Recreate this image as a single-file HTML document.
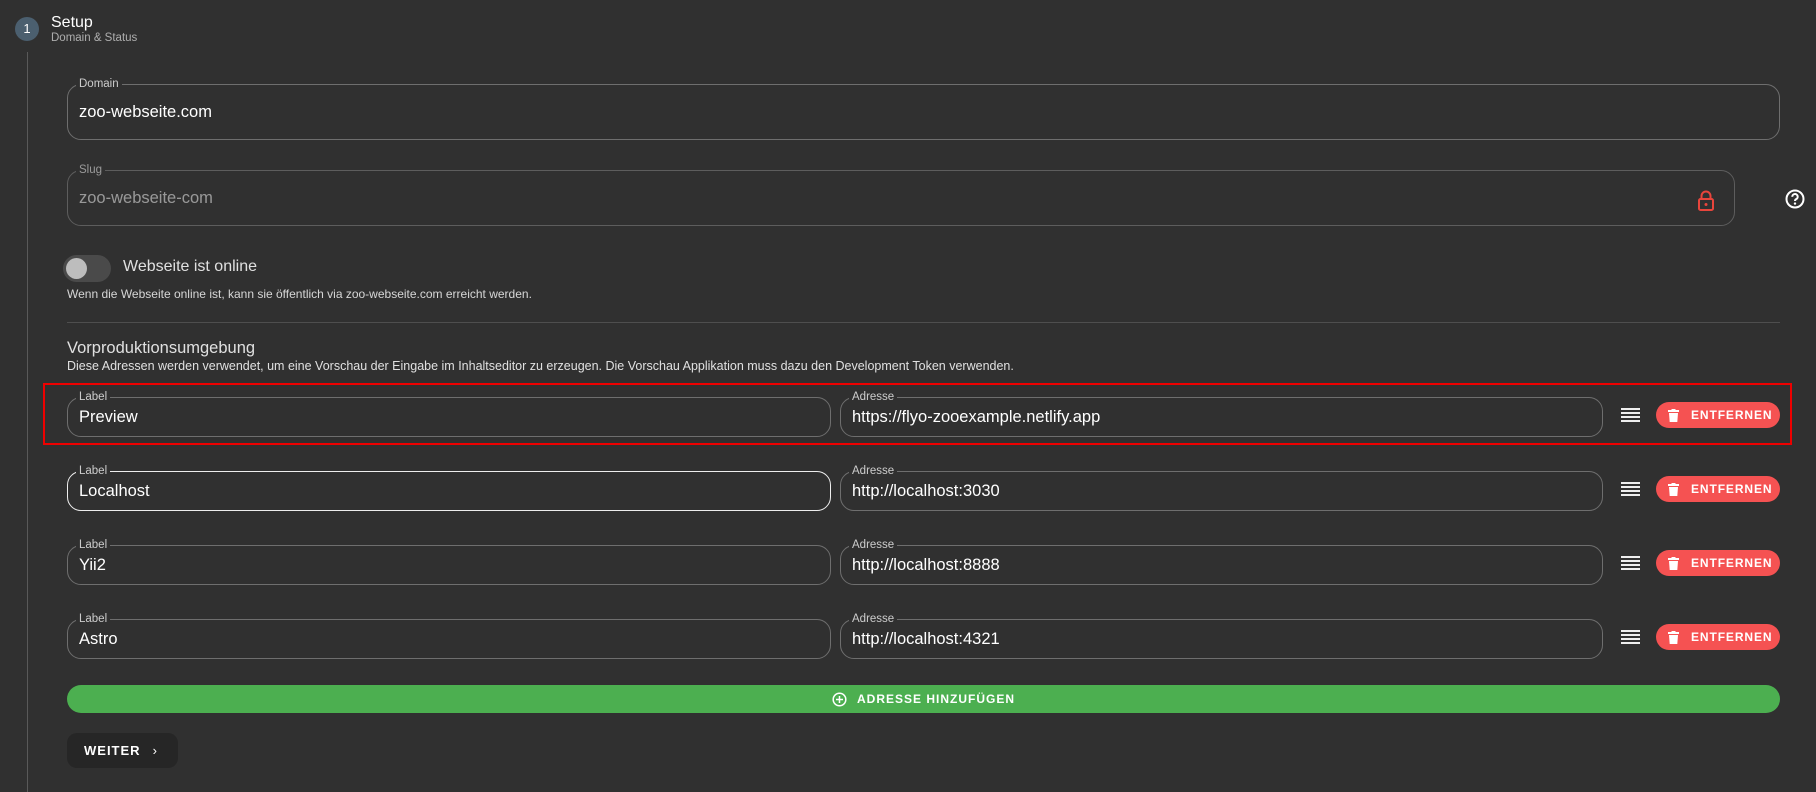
<!DOCTYPE html><html><head><meta charset="utf-8"><style>
*{box-sizing:border-box;margin:0;padding:0}
body{width:1816px;height:785px;background:#303030;font-family:"Liberation Sans",sans-serif;color:#fff;position:relative;overflow:hidden}
.a{position:absolute}
.f{position:absolute;border:1px solid rgba(255,255,255,.3);border-radius:14px}
.f .l{position:absolute;top:-8px;left:8px;padding:0 3px;background:#303030;font-size:11.5px;color:rgba(255,255,255,.75);line-height:14px}
.f .v{position:absolute;left:11px;font-size:16.5px;color:#fff}
.btn{position:absolute;left:1656px;width:124px;height:26px;border-radius:13px;background:#f55252;font-size:12px;font-weight:bold;letter-spacing:0.9px;display:flex;align-items:center;padding-left:12px;white-space:nowrap}
.btn span{margin-left:12px}
.menu{position:absolute;left:1621px;width:19px}
.menu i{display:block;height:2px;background:#eee;margin-bottom:2px}
</style></head><body>
<div class="a" style="left:15px;top:17px;width:24px;height:24px;border-radius:50%;background:#4b5f6f;font-size:13px;text-align:center;line-height:24px">1</div>
<div class="a" style="left:51px;top:14px;font-size:16px">Setup</div>
<div class="a" style="left:51px;top:32px;font-size:11.5px;color:rgba(255,255,255,.6)">Domain &amp; Status</div>
<div class="a" style="left:27px;top:52px;width:1px;height:740px;background:rgba(255,255,255,.2)"></div>

<div class="f" style="left:67px;top:84px;width:1713px;height:56px"><div class="l">Domain</div><div class="v" style="top:18px">zoo-webseite.com</div></div>
<div class="f" style="left:67px;top:170px;width:1668px;height:56px;border-color:rgba(255,255,255,.22)"><div class="l" style="color:rgba(255,255,255,.5)">Slug</div><div class="v" style="top:18px;color:rgba(255,255,255,.5)">zoo-webseite-com</div>
<svg class="a" style="left:1629px;top:19px" width="18" height="22" viewBox="0 0 18 22"><path d="M4.5 9V6a4.5 4.5 0 0 1 9 0v3" fill="none" stroke="#e8453c" stroke-width="2"/><rect x="2" y="9" width="14" height="11" rx="1.5" fill="none" stroke="#e8453c" stroke-width="2"/><circle cx="9" cy="14.5" r="1.5" fill="#e8453c"/></svg></div>
<svg class="a" style="left:1785px;top:189px" width="20" height="20" viewBox="0 0 20 20"><circle cx="10" cy="10" r="8.5" fill="none" stroke="#fff" stroke-width="2"/><path d="M7.3 7.8a2.7 2.7 0 1 1 3.8 2.4c-.8.4-1.1.9-1.1 1.8" fill="none" stroke="#fff" stroke-width="2"/><circle cx="10" cy="14.6" r="1.2" fill="#fff"/></svg>

<div class="a" style="left:63px;top:255px;width:48px;height:27px;border-radius:14px;background:#4a4a4a"></div>
<div class="a" style="left:66px;top:258px;width:21px;height:21px;border-radius:50%;background:#bdbdbd"></div>
<div class="a" style="left:123px;top:258px;font-size:16px;color:rgba(255,255,255,.85)">Webseite ist online</div>
<div class="a" style="left:67px;top:287px;font-size:12px;color:rgba(255,255,255,.8)">Wenn die Webseite online ist, kann sie öffentlich via zoo-webseite.com erreicht werden.</div>
<div class="a" style="left:67px;top:322px;width:1713px;height:1px;background:rgba(255,255,255,.15)"></div>
<div class="a" style="left:67px;top:339px;font-size:16.5px;color:rgba(255,255,255,.85)">Vorproduktionsumgebung</div>
<div class="a" style="left:67px;top:359px;font-size:12.5px;color:rgba(255,255,255,.85)">Diese Adressen werden verwendet, um eine Vorschau der Eingabe im Inhaltseditor zu erzeugen. Die Vorschau Applikation muss dazu den Development Token verwenden.</div>
<div class="a" style="left:43px;top:383px;width:1749px;height:62px;border:2px solid #e00"></div>

<div class="f" style="left:67px;top:397px;width:764px;height:40px"><div class="l">Label</div><div class="v" style="top:10px">Preview</div></div>
<div class="f" style="left:840px;top:397px;width:763px;height:40px"><div class="l">Adresse</div><div class="v" style="top:10px">https://flyo-zooexample.netlify.app</div></div>
<div class="menu" style="top:408px"><i></i><i></i><i></i><i></i></div>
<div class="btn" style="top:402px"><svg width="11" height="13" viewBox="0 0 11 13"><rect x="0" y="1" width="11" height="2" fill="#fff"/><rect x="3.5" y="0" width="4" height="2" fill="#fff"/><path d="M1 4h9l-.7 9H1.7z" fill="#fff"/></svg><span>ENTFERNEN</span></div>

<div class="f" style="left:67px;top:471px;width:764px;height:40px;border-color:#eee"><div class="l">Label</div><div class="v" style="top:10px">Localhost</div></div>
<div class="f" style="left:840px;top:471px;width:763px;height:40px"><div class="l">Adresse</div><div class="v" style="top:10px">http://localhost:3030</div></div>
<div class="menu" style="top:482px"><i></i><i></i><i></i><i></i></div>
<div class="btn" style="top:476px"><svg width="11" height="13" viewBox="0 0 11 13"><rect x="0" y="1" width="11" height="2" fill="#fff"/><rect x="3.5" y="0" width="4" height="2" fill="#fff"/><path d="M1 4h9l-.7 9H1.7z" fill="#fff"/></svg><span>ENTFERNEN</span></div>

<div class="f" style="left:67px;top:545px;width:764px;height:40px"><div class="l">Label</div><div class="v" style="top:10px">Yii2</div></div>
<div class="f" style="left:840px;top:545px;width:763px;height:40px"><div class="l">Adresse</div><div class="v" style="top:10px">http://localhost:8888</div></div>
<div class="menu" style="top:556px"><i></i><i></i><i></i><i></i></div>
<div class="btn" style="top:550px"><svg width="11" height="13" viewBox="0 0 11 13"><rect x="0" y="1" width="11" height="2" fill="#fff"/><rect x="3.5" y="0" width="4" height="2" fill="#fff"/><path d="M1 4h9l-.7 9H1.7z" fill="#fff"/></svg><span>ENTFERNEN</span></div>

<div class="f" style="left:67px;top:619px;width:764px;height:40px"><div class="l">Label</div><div class="v" style="top:10px">Astro</div></div>
<div class="f" style="left:840px;top:619px;width:763px;height:40px"><div class="l">Adresse</div><div class="v" style="top:10px">http://localhost:4321</div></div>
<div class="menu" style="top:630px"><i></i><i></i><i></i><i></i></div>
<div class="btn" style="top:624px"><svg width="11" height="13" viewBox="0 0 11 13"><rect x="0" y="1" width="11" height="2" fill="#fff"/><rect x="3.5" y="0" width="4" height="2" fill="#fff"/><path d="M1 4h9l-.7 9H1.7z" fill="#fff"/></svg><span>ENTFERNEN</span></div>

<div class="a" style="left:67px;top:685px;width:1713px;height:28px;border-radius:14px;background:#4caf50;display:flex;align-items:center;justify-content:center;font-size:12px;font-weight:bold;letter-spacing:1px">
<svg width="15" height="15" viewBox="0 0 15 15" style="margin-right:10px"><circle cx="7.5" cy="7.5" r="6.3" fill="none" stroke="#fff" stroke-width="1.5"/><path d="M7.5 4v7M4 7.5h7" stroke="#fff" stroke-width="1.5"/></svg>ADRESSE HINZUFÜGEN</div>
<div class="a" style="left:67px;top:733px;width:111px;height:35px;border-radius:10px;background:#262626;display:flex;align-items:center;padding-left:17px;font-size:13px;font-weight:bold;letter-spacing:1px">WEITER<span style="margin-left:12px;font-weight:normal">›</span></div>
</body></html>
